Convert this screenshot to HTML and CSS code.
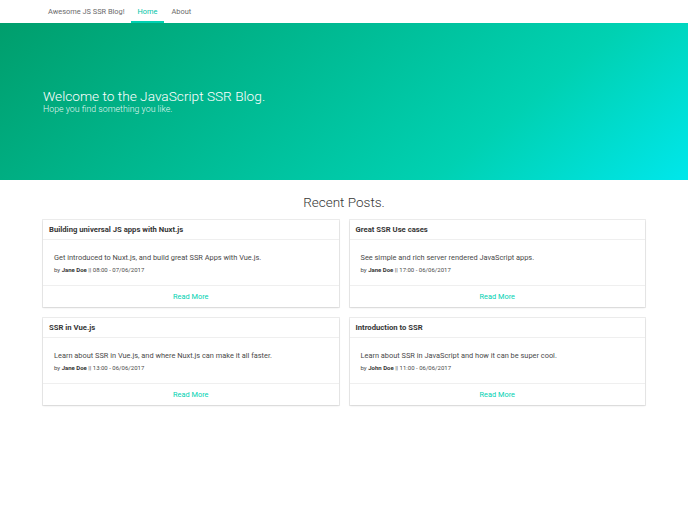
FILE: index.html
```html
<!DOCTYPE html>
<html lang="en">
<head>
  <meta charset="UTF-8">
  <meta name="viewport" content="width=device-width, initial-scale=1.0">
  <title>Awesome JS SSR Blog!</title>
  <link rel="stylesheet" href="styles.css">
</head>
<body>
  <nav class="nav">
    <div class="nav-inner">
      <a class="brand">Awesome JS SSR Blog!</a>
      <a class="nav-item active">Home</a>
      <a class="nav-item">About</a>
    </div>
  </nav>

  <section class="hero">
    <div class="hero-body">
      <h1 class="title">Welcome to the JavaScript SSR Blog.</h1>
      <h2 class="subtitle">Hope you find something you like.</h2>
    </div>
  </section>

  <section class="posts">
    <h3 class="section-title">Recent Posts.</h3>
    <div class="grid">
      <div class="card">
        <div class="card-header">Building universal JS apps with Nuxt.js</div>
        <div class="card-content">
          <p class="summary">Get introduced to Nuxt.js, and build great SSR Apps with Vue.js.</p>
          <p class="meta">by <strong>Jane Doe</strong> || 08:00 - 07/06/2017</p>
        </div>
        <div class="card-footer"><a>Read More</a></div>
      </div>
      <div class="card">
        <div class="card-header">Great SSR Use cases</div>
        <div class="card-content">
          <p class="summary">See simple and rich server rendered JavaScript apps.</p>
          <p class="meta">by <strong>Jane Doe</strong> || 17:00 - 06/06/2017</p>
        </div>
        <div class="card-footer"><a>Read More</a></div>
      </div>
      <div class="card">
        <div class="card-header">SSR in Vue.js</div>
        <div class="card-content">
          <p class="summary">Learn about SSR in Vue.js, and where Nuxt.js can make it all faster.</p>
          <p class="meta">by <strong>Jane Doe</strong> || 13:00 - 06/06/2017</p>
        </div>
        <div class="card-footer"><a>Read More</a></div>
      </div>
      <div class="card">
        <div class="card-header">Introduction to SSR</div>
        <div class="card-content">
          <p class="summary">Learn about SSR in JavaScript and how it can be super cool.</p>
          <p class="meta">by <strong>John Doe</strong> || 11:00 - 06/06/2017</p>
        </div>
        <div class="card-footer"><a>Read More</a></div>
      </div>
    </div>
  </section>
</body>
</html>
```

FILE: styles.css
```css
* {
  box-sizing: border-box;
  margin: 0;
  padding: 0;
}

body {
  font-family: 'Roboto', 'Liberation Sans', sans-serif;
  background: #ffffff;
  color: #4a4a4a;
}

a {
  text-decoration: none;
}

.nav {
  height: 23px;
  background: #ffffff;
  position: relative;
  z-index: 1;
}

.nav-inner {
  display: flex;
  align-items: stretch;
  height: 100%;
  padding-left: 48px;
}

.brand,
.nav-item {
  display: flex;
  align-items: center;
  font-size: 7.4px;
  color: #6b6b6b;
  padding: 1px 7px 0;
  border-bottom: 2px solid transparent;
}

.brand {
  padding-left: 0;
  padding-right: 6px;
}

.nav-item.active {
  color: #00c4a7;
  border-bottom-color: #00d1b2;
}

.hero {
  height: 157px;
  background-image: linear-gradient(141deg, #009e6c 0%, #00d1b2 71%, #00e7eb 100%);
  display: flex;
  align-items: center;
}

.hero-body {
  padding: 0 43px;
}

.title {
  font-size: 13.7px;
  font-weight: 300;
  color: #ffffff;
  line-height: 16px;
}

.subtitle {
  font-size: 8.8px;
  font-weight: 300;
  color: rgba(255, 255, 255, 0.9);
  line-height: 11px;
}

.posts {
  padding: 14px 43px 20px;
}

.section-title {
  text-align: center;
  font-size: 13.5px;
  font-weight: 300;
  color: #363636;
  line-height: 17px;
  margin-bottom: 9px;
}

.grid {
  display: grid;
  grid-template-columns: 1fr 1fr;
  gap: 11px;
}

.card {
  background: #ffffff;
  box-shadow: 0 1px 2px rgba(10, 10, 10, 0.1), 0 0 0 1px rgba(10, 10, 10, 0.08);
}

.card-header {
  height: 20px;
  display: flex;
  align-items: center;
  padding: 0 6px;
  font-size: 7.7px;
  font-weight: 700;
  color: #363636;
  border-bottom: 1px solid #efefef;
}

.card-content {
  height: 45px;
  padding: 12px 11px 0;
}

.summary {
  font-size: 7.4px;
  line-height: 11px;
  color: #4a4a4a;
}

.meta {
  font-size: 6px;
  line-height: 9px;
  margin-top: 2px;
  color: #4a4a4a;
}

.meta strong {
  color: #363636;
}

.card-footer {
  height: 22px;
  display: flex;
  align-items: center;
  justify-content: center;
  border-top: 1px solid #efefef;
}

.card-footer a {
  font-size: 7.4px;
  color: #00d1b2;
}
```
